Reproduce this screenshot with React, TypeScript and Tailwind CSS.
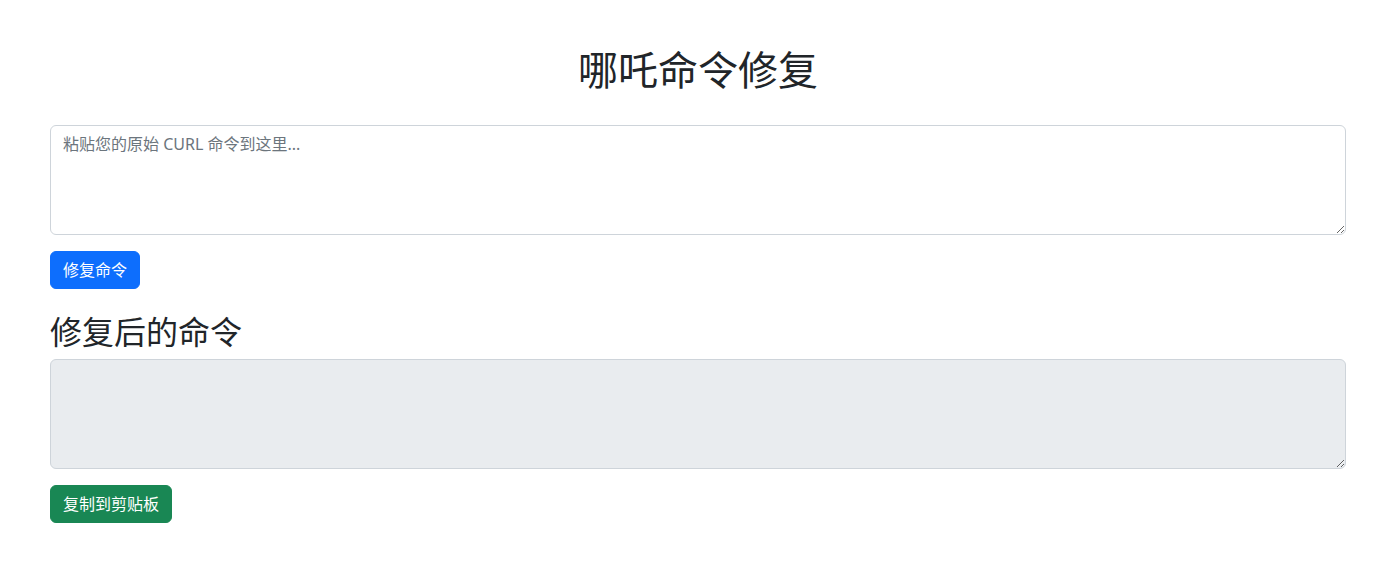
import React from "react";

export default function App() {
  const font = {
    fontFamily:
      '"Noto Sans", "Noto Sans CJK SC", "Liberation Sans", sans-serif',
  };
  return (
    <div className="min-h-[569px] w-[1392px] bg-white text-[#212529]" style={font}>
      <div className="ml-[50px] w-[1296px] pt-[46px]">
        <h1 className="text-center text-[40px] font-normal leading-[48px]">
          哪吒命令修复
        </h1>
        <textarea
          className="mt-[31px] block h-[110px] w-full rounded-[6px] border border-[#ced4da] bg-white px-3 py-1.5 text-base leading-6 text-[#212529] placeholder:text-[#6c757d] outline-none"
          placeholder="粘贴您的原始 CURL 命令到这里..."
        />
        <button className="mt-4 block h-[38px] rounded-[6px] border border-[#0d6efd] bg-[#0d6efd] px-3 text-base leading-6 text-white">
          修复命令
        </button>
        <h2 className="mt-6 mb-2 text-[32px] font-normal leading-[38px]">
          修复后的命令
        </h2>
        <textarea
          readOnly
          className="block h-[110px] w-full rounded-[6px] border border-[#ced4da] bg-[#e9ecef] px-3 py-1.5 text-base leading-6 outline-none"
        />
        <button className="mt-4 block h-[38px] rounded-[6px] border border-[#198754] bg-[#198754] px-3 text-base leading-6 text-white">
          复制到剪贴板
        </button>
      </div>
    </div>
  );
}
